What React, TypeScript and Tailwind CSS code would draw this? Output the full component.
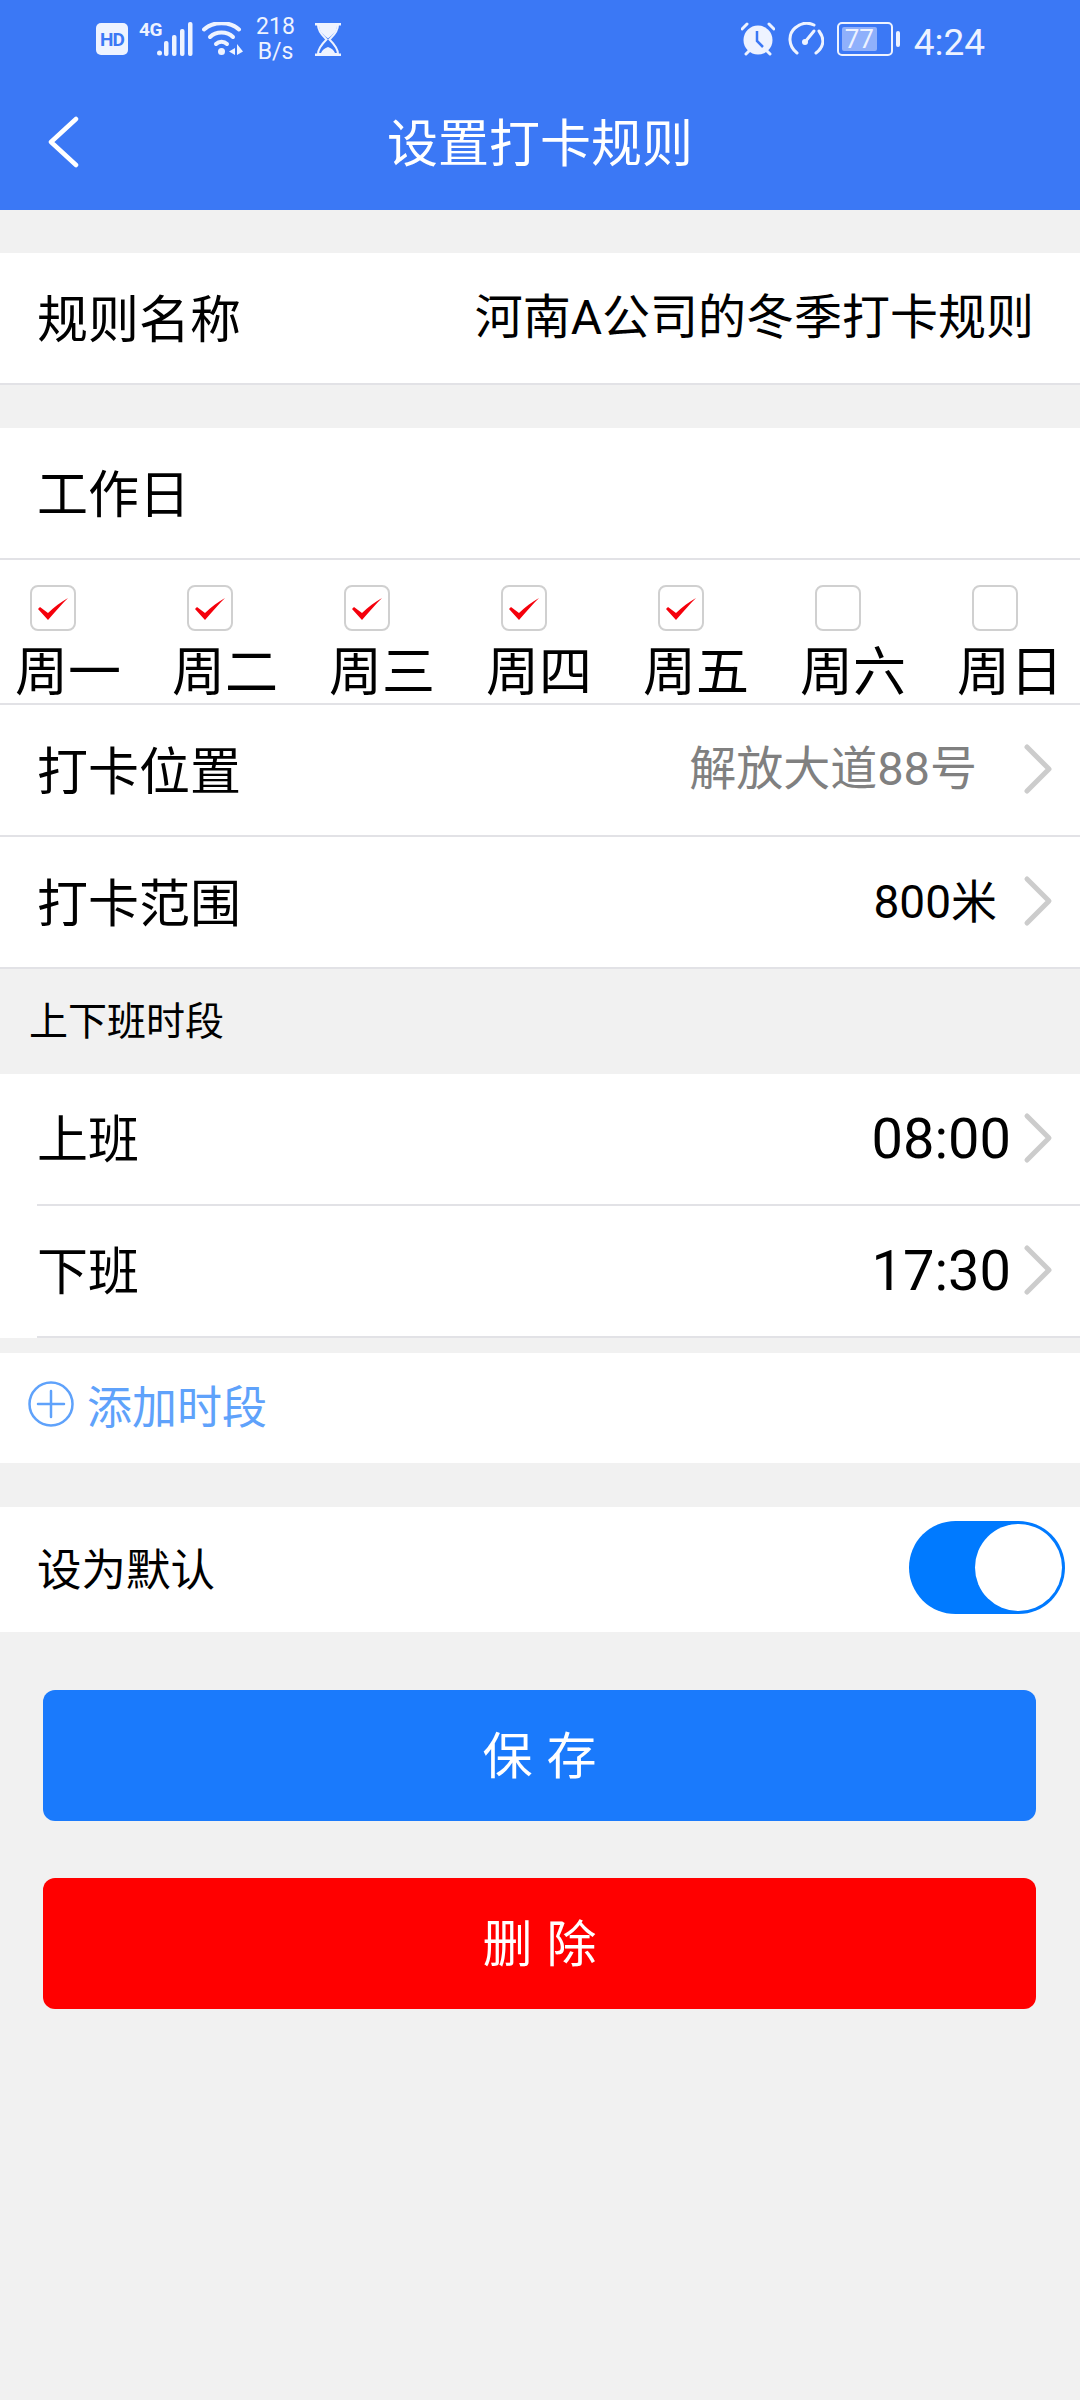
const FONT = "font-['Roboto','Noto_Sans_CJK_SC',sans-serif]";

const DAYS = [
  { label: '周一', checked: true },
  { label: '周二', checked: true },
  { label: '周三', checked: true },
  { label: '周四', checked: true },
  { label: '周五', checked: true },
  { label: '周六', checked: false },
  { label: '周日', checked: false },
];

const Chevron = () => (
  <svg width="30" height="52" viewBox="0 0 30 52" fill="none" className="mb-[2px] shrink-0">
    <path d="M4 4 L26 26 L4 48" stroke="#cccccc" strokeWidth="5" strokeLinecap="round" strokeLinejoin="round" />
  </svg>
);

const StatusLeft = () => (
  <div className="flex items-center">
    <div className="flex h-[32px] w-[32px] items-center justify-center rounded-[5px] bg-[#eef3ff] text-[19px] leading-none font-bold tracking-[-1px] text-[#3b78f5]">
      HD
    </div>
    <div className="relative ml-[11px] h-[34px] w-[54px]">
      <span className="absolute top-[-2px] left-0 text-[19px] leading-[20px] font-bold tracking-[-0.5px] text-[#eef3ff]">4G</span>
      <svg width="54" height="34" viewBox="0 0 54 34" fill="#eef3ff">
        <circle cx="20.5" cy="31" r="2.5" />
        <rect x="25" y="19" width="4.5" height="15" rx="2" />
        <rect x="33" y="13" width="4.5" height="21" rx="2" />
        <rect x="41" y="7" width="4.5" height="27" rx="2" />
        <rect x="49" y="0" width="4.5" height="34" rx="2" />
      </svg>
    </div>
    <svg width="42" height="34" viewBox="0 0 42 34" fill="none" className="ml-[9px]">
      <path d="M2 7.5 C11 -1 28 -1 37 7.5" stroke="#eef3ff" strokeWidth="4" strokeLinecap="round" />
      <path d="M8 15 C14 9 25 9 31 15" stroke="#eef3ff" strokeWidth="4" strokeLinecap="round" />
      <path d="M14 22 C17 19 22 19 25 22" stroke="#eef3ff" strokeWidth="4" strokeLinecap="round" />
      <circle cx="19.5" cy="29.5" r="3.5" fill="#eef3ff" />
      <path d="M33 26 L27 29.5 L33 33 Z M35 22 L41 29.5 L35 33 Z" fill="#eef3ff" />
    </svg>
    <div className="ml-[12px] flex w-[39px] flex-col items-center text-[23px] leading-[25px] text-[#eef3ff]">
      <span>218</span>
      <span>B/s</span>
    </div>
    <svg width="26" height="33" viewBox="0 0 26 33" fill="#eef3ff" className="ml-[20px]">
      <rect x="0" y="0" width="26" height="2.5" />
      <rect x="0" y="30.5" width="26" height="2.5" />
      <path d="M3 2 H23 C23 9 18 13 14.5 16.5 C18 20 23 25 23 31 H3 C3 25 8 20 11.5 16.5 C8 13 3 9 3 2 Z" fill="none" stroke="#eef3ff" strokeWidth="2" />
      <path d="M4 3 H22 C22 9 17 12 13 15.5 C9 12 4 9 4 3 Z M6 30 C7 27 10 25 13 24 C16 25 19 27 20 30 Z" />
    </svg>
  </div>
);

const StatusRight = () => (
  <div className="flex items-center">
    <svg width="34" height="34" viewBox="0 0 34 34" fill="none">
      <circle cx="17" cy="18" r="14.5" fill="#eef3ff" />
      <path d="M16 9 V19 L22 25" stroke="#3b78f5" strokeWidth="2.5" />
      <path d="M1 7 L6 2 M33 7 L28 2 M5 32 L8 29 M29 32 L26 29" stroke="#eef3ff" strokeWidth="3" strokeLinecap="round" />
    </svg>
    <svg width="36" height="34" viewBox="0 0 36 34" fill="none" className="ml-[13px]">
      <path d="M9 31 C0 24 0 12 7 6 C13 1 20 0 26 3" stroke="#eef3ff" strokeWidth="3" strokeLinecap="round" />
      <path d="M31 9 C37 17 36 25 28 31" stroke="#eef3ff" strokeWidth="3" strokeLinecap="round" />
      <path d="M17 20 L26 9" stroke="#eef3ff" strokeWidth="3" strokeLinecap="round" />
      <circle cx="17" cy="20" r="3" fill="#eef3ff" />
    </svg>
    <div className="ml-[13px] flex h-[34px] w-[56px] items-center rounded-[5px] border-[2.5px] border-[#eef3ff] p-[3px]">
      <div className="flex h-full w-[77%] items-center justify-center rounded-[2px] bg-[#8fb0fb] text-[26px] leading-none text-[#eef3ff]">
        77
      </div>
    </div>
    <div className="ml-[3px] h-[16px] w-[4px] rounded-[2px] bg-[#eef3ff]" />
    <span className="mt-[6px] ml-[14px] text-[37px] leading-none text-[#eef3ff]">4:24</span>
  </div>
);

const Row = ({ label, children }: { label: string; children?: React.ReactNode }) => (
  <div className="flex h-[132px] items-center justify-between border-b-2 border-[#e2e2e6] bg-white pl-[37px]">
    <span className="pt-[5px] text-[51px] leading-none text-black">{label}</span>
    {children}
  </div>
);

export default function App() {
  return (
    <div className={`${FONT} flex min-h-[2400px] w-[1080px] flex-col bg-[#f1f1f1]`}>
      <header className="h-[210px] bg-[#3b78f5]">
        <div className="flex h-[78px] items-center justify-between pr-[95px] pl-[96px]">
          <StatusLeft />
          <StatusRight />
        </div>
        <div className="relative flex h-[132px] items-center justify-center">
          <svg width="34" height="52" viewBox="0 0 34 52" fill="none" className="absolute top-[38px] left-[46px]">
            <path d="M30 3 L5 26 L30 49" stroke="white" strokeWidth="4.5" strokeLinecap="round" strokeLinejoin="round" />
          </svg>
          <h1 className="text-[51px] leading-none font-normal text-white">设置打卡规则</h1>
        </div>
      </header>

      <div className="mt-[43px]">
        <Row label="规则名称">
          <span className="mr-[46px] text-[48px] leading-none text-black">河南A公司的冬季打卡规则</span>
        </Row>
      </div>

      <div className="mt-[43px]">
        <Row label="工作日" />
        <div className="flex h-[145px] justify-between border-b-2 border-[#e2e2e6] bg-white pt-[25px] pr-[17px] pl-[15px]">
          {DAYS.map((day) => (
            <div key={day.label} className="w-[106px]">
              <div className="ml-[15px] flex h-[46px] w-[46px] items-center justify-center rounded-[8px] border-2 border-[#d0d0d0] bg-white">
                {day.checked && (
                  <svg width="32" height="24" viewBox="0 0 32 24" fill="#f5000b" className="mt-[2px]">
                    <path d="M1 12 L3 10 L11 16 C17 10 24 5 31 1 C25 7 18 15 11 23 Z" />
                  </svg>
                )}
              </div>
              <div className="mt-[16px] text-[53px] leading-[53px] text-black">{day.label}</div>
            </div>
          ))}
        </div>
        <Row label="打卡位置">
          <div className="flex items-center">
            <span className="mb-[3px] text-[47px] leading-none text-[#808080]">解放大道88号</span>
            <div className="mr-[27px] ml-[46px] flex"><Chevron /></div>
          </div>
        </Row>
        <Row label="打卡范围">
          <div className="flex items-center">
            <span className="text-[46px] leading-none text-black">800米</span>
            <div className="mr-[27px] ml-[26px] flex"><Chevron /></div>
          </div>
        </Row>
      </div>

      <div className="flex h-[105px] items-center pt-[2px] pl-[29px] text-[39px] leading-none text-black">上下班时段</div>

      <div className="bg-white">
        {[
          { label: '上班', time: '08:00' },
          { label: '下班', time: '17:30' },
        ].map((item) => (
          <div key={item.label} className="ml-[37px] flex h-[132px] items-center justify-between border-b-2 border-[#e2e2e6]">
            <span className="pt-[2px] text-[51px] leading-none text-black">{item.label}</span>
            <div className="flex items-center">
              <span className="text-[56px] leading-none text-black">{item.time}</span>
              <div className="mr-[27px] ml-[12px] flex"><Chevron /></div>
            </div>
          </div>
        ))}
      </div>

      <div className="mt-[15px] flex h-[110px] items-center bg-white pl-[28px]">
        <svg width="46" height="46" viewBox="0 0 46 46" fill="none" className="mb-[8px]">
          <circle cx="23" cy="23" r="21.5" stroke="#5fa2fb" strokeWidth="2.5" />
          <path d="M10 23 H36 M23 10 V36" stroke="#5fa2fb" strokeWidth="2.5" strokeLinecap="round" />
        </svg>
        <span className="ml-[13px] text-[45px] leading-none text-[#5fa2fb]">添加时段</span>
      </div>

      <div className="mt-[44px] flex h-[125px] items-center justify-between bg-white pl-[37px]">
        <span className="pt-[4px] text-[44.5px] leading-none text-black">设为默认</span>
        <div className="mr-[15px] mb-[5px] flex h-[93px] w-[156px] items-center justify-end rounded-full bg-[#007aff] pr-[3px]">
          <div className="h-[87px] w-[87px] rounded-full bg-white" />
        </div>
      </div>

      <div className="mt-[58px] flex flex-col gap-[57px] pr-[44px] pl-[43px]">
        <button className="flex h-[131px] items-center justify-center rounded-[12px] bg-[#1a7afc] pt-[2px] pl-[14px] text-[50px] leading-none tracking-[14px] text-white">
          保存
        </button>
        <button className="flex h-[131px] items-center justify-center rounded-[12px] bg-[#ff0000] pt-[2px] pl-[14px] text-[50px] leading-none tracking-[14px] text-white">
          删除
        </button>
      </div>
    </div>
  );
}
